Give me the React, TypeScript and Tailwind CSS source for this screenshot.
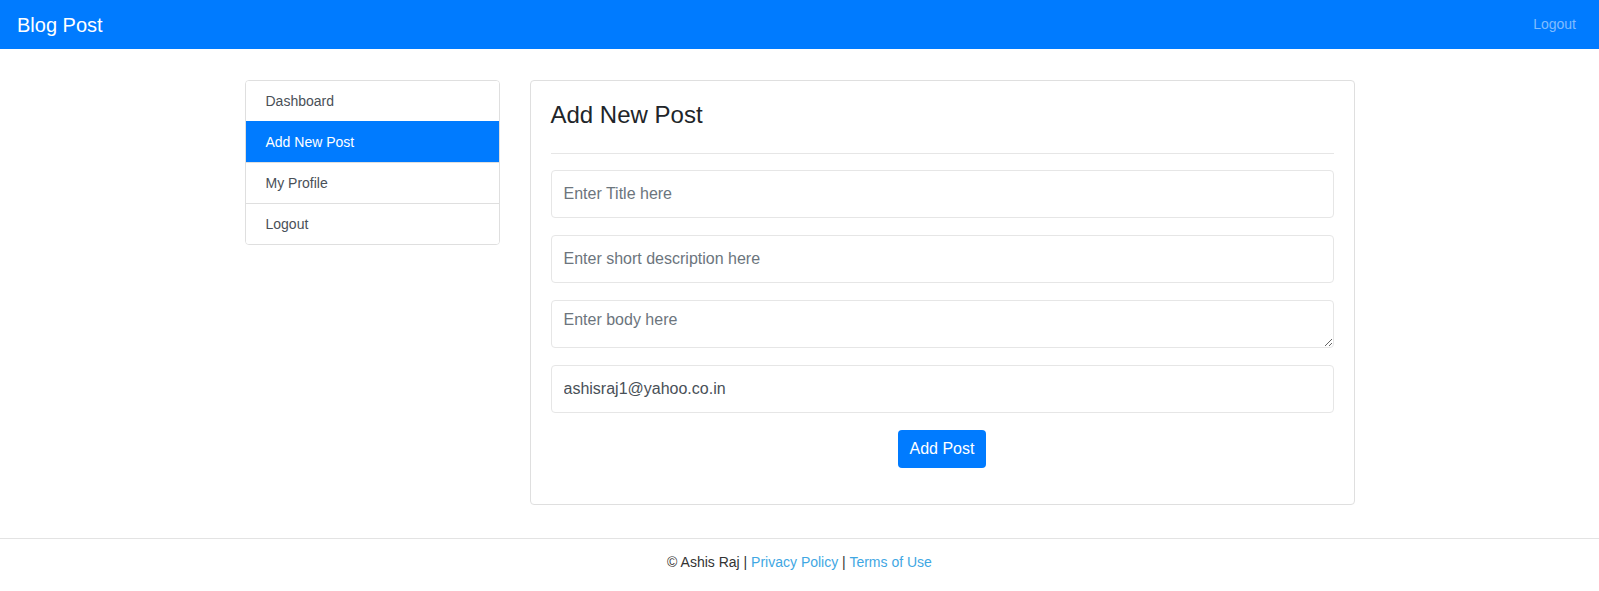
import React from 'react';

const App = () => {
  const menu = [
    { label: 'Dashboard', active: false },
    { label: 'Add New Post', active: true },
    { label: 'My Profile', active: false },
    { label: 'Logout', active: false }
  ];

  return (
    <div className="min-h-screen bg-white font-['Liberation_Sans',Arial,sans-serif] text-[#212529]">
      {/* Navbar */}
      <nav className="h-[49px] bg-[#007bff] flex items-center justify-between pl-[17px] pr-[23px]">
        <a href="#" className="text-[20px] text-white leading-none">
          Blog Post
        </a>
        <a href="#" className="text-[14px] text-[#80bdff]">
          Logout
        </a>
      </nav>

      {/* Content */}
      <div className="w-[1110px] mx-auto pt-[31px] flex gap-[30px] items-start">
        <div className="w-[255px] border border-[#dfdfdf] rounded-[4px] overflow-hidden">
          {menu.map((item, index) => (
            <a
              key={item.label}
              href="#"
              className={
                (index > 0 ? 'border-t h-[41px] ' : 'h-[40px] ') +
                (item.active
                  ? 'bg-[#007bff] text-white border-[#007bff] '
                  : 'bg-white text-[#495057] border-[#dfdfdf] ') +
                'flex items-center px-5 text-[14px]'
              }
            >
              {item.label}
            </a>
          ))}
        </div>

        <div className="flex-1 border border-[#dfdfdf] rounded-[4px] px-5 pt-5 pb-[36px]">
          <h3 className="text-[24px] leading-[1.2] font-normal">Add New Post</h3>
          <hr className="mt-[23px] mb-4 border-0 border-t border-[#e6e6e6]" />
          <form className="flex flex-col">
            <input
              type="text"
              placeholder="Enter Title here"
              className="h-[48px] mb-[17px] px-3 border border-[#e6e6e6] rounded-[4px] text-[16px] text-[#495057] placeholder:text-[#6c757d] outline-none"
            />
            <input
              type="text"
              placeholder="Enter short description here"
              className="h-[48px] mb-[17px] px-3 border border-[#e6e6e6] rounded-[4px] text-[16px] text-[#495057] placeholder:text-[#6c757d] outline-none"
            />
            <textarea
              placeholder="Enter body here"
              className="h-[48px] mb-[17px] px-3 pt-[7px] border border-[#e6e6e6] rounded-[4px] text-[16px] leading-[1.5] text-[#495057] placeholder:text-[#6c757d] outline-none resize-y"
            />
            <input
              type="text"
              defaultValue="ashisraj1@yahoo.co.in"
              className="h-[48px] mb-[17px] px-3 border border-[#e6e6e6] rounded-[4px] text-[16px] text-[#495057] outline-none"
            />
            <div className="flex justify-center">
              <button
                type="button"
                className="h-[38px] px-3 bg-[#007bff] text-white text-[16px] rounded-[4px]"
              >
                Add Post
              </button>
            </div>
          </form>
        </div>
      </div>

      {/* Footer */}
      <footer className="mt-[33px] border-t border-[#e3e3e3] pt-[13px] pb-[18px] text-center text-[14px] leading-[1.5] text-[#333]">
        © Ashis Raj | <a href="#" className="text-[#3fa7e3]">Privacy Policy</a> |{' '}
        <a href="#" className="text-[#3fa7e3]">Terms of Use</a>
      </footer>
    </div>
  );
};

export default App;
